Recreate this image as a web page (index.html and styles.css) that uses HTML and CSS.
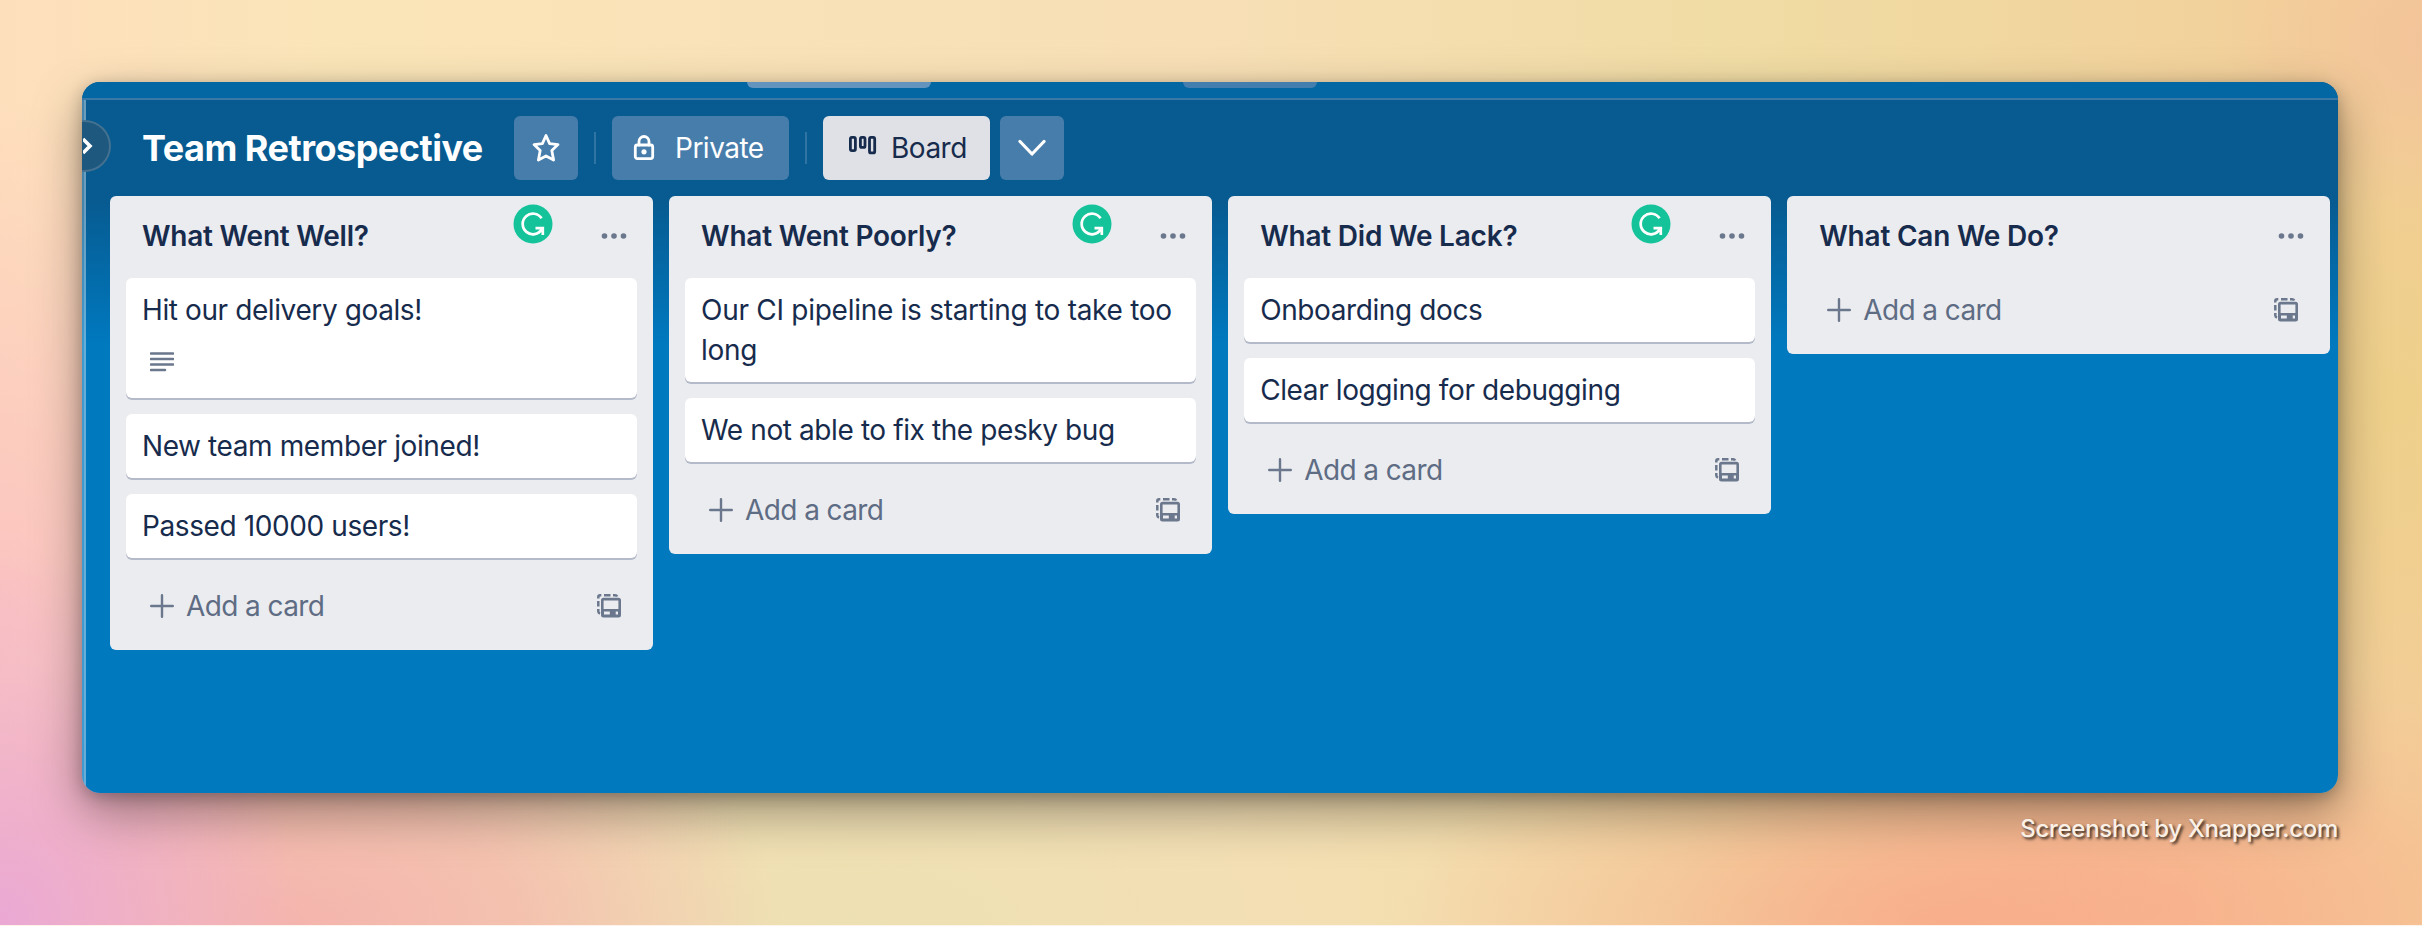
FILE: index.html
```html
<!DOCTYPE html>
<html lang="en">
<head>
<meta charset="utf-8">
<title>Team Retrospective</title>
<link rel="stylesheet" href="styles.css">
</head>
<body>
<svg class="defs" width="0" height="0">
  <symbol id="dots" viewBox="0 0 26 8"><circle cx="3.500" cy="4" r="2.800"/><circle cx="13" cy="4" r="2.800"/><circle cx="22.500" cy="4" r="2.800"/></symbol>
  <symbol id="plus" viewBox="0 0 24 24"><path d="M12 1.200V22.800M1.200 12H22.800"/></symbol>
  <symbol id="template" viewBox="0 0 24 24">
    <path fill="none" stroke="currentColor" stroke-width="2.500" d="M1.300 4.500V3Q1.300 1.300 3 1.300H4.300M7 1.300H13.500M16 1.300H18Q19.600 1.300 20.200 2.600M1.300 7V12.500M1.300 15V17.500Q1.400 19 3 19.600"/>
    <path fill="currentColor" fill-rule="evenodd" d="M6.500 3.800H21.500Q24 3.800 24 6.300V21Q24 23.500 21.500 23.500H6.500Q4 23.500 4 21V6.300Q4 3.800 6.500 3.800ZM6.600 6.400V14.900H21.400V6.400ZM7 17.500V20.500H12.800V17.500ZM18.700 17.500V20.500H21V17.500Z"/>
  </symbol>
  <symbol id="grammar" viewBox="0 0 40 40"><circle cx="20" cy="20" r="19.500" fill="#15c39a"/><path d="M28.600 14.300A10.300 10.300 0 1 0 28.800 25.300M22.500 24.200H29.800V31" fill="none" stroke="#fff" stroke-width="2.700"/></symbol>
</svg>
<div class="window">
  <div class="topbar"><span class="stub stub-search"></span><span class="stub stub-create"></span></div>
  <div class="rail"></div>
  <div class="toggle"><svg width="10" height="20" viewBox="0 0 10 20"><path d="M0 3L7 10L0 17" fill="none" stroke="#fff" stroke-width="3.600"/></svg></div>
  <header class="header">
    <h1 class="board-name">Team Retrospective</h1>
    <button class="btn star"><svg width="28" height="30" viewBox="0 0 28 30"><path d="M14 2.500L17.600 10.600L26 11.600L19.800 17.400L21.600 27L14 23L6.400 27L8.200 17.400L2 11.600L10.400 10.600Z"/></svg></button>
    <span class="sep"></span>
    <button class="btn private"><svg width="22" height="26" viewBox="0 0 22 26"><path d="M6 10V6.500A5 5 0 0 1 16 6.500V10"/><rect x="2.300" y="10" width="17.400" height="13.600" rx="2"/><circle cx="11" cy="16.800" r="2.600" fill="#fff" stroke="none"/></svg><span>Private</span></button>
    <span class="sep"></span>
    <button class="btn view"><svg width="28" height="22" viewBox="0 0 28 22"><rect x="1.400" y="2.400" width="5" height="13.200" rx="1.500"/><rect x="11.400" y="2.400" width="4.600" height="10" rx="1.500"/><rect x="20.500" y="2.400" width="5.200" height="15.500" rx="1.500"/></svg><span>Board</span></button>
    <button class="btn more"><svg width="28" height="18" viewBox="0 0 28 18"><path d="M2 2.500L14 15L26 2.500"/></svg></button>
  </header>
  <main class="lists">
    <section class="list">
      <h2 class="list-head"><span>What Went Well?</span><svg class="dots"><use href="#dots"/></svg></h2>
      <svg class="grammar"><use href="#grammar"/></svg>
      <article class="card with-badge">Hit our delivery goals!<svg class="desc" width="24" height="20" viewBox="0 0 24 20"><path d="M1 1.500H23M1 7H23M1 12.500H23M1 18H15"/></svg></article>
      <article class="card">New team member joined!</article>
      <article class="card">Passed 10000 users!</article>
      <footer class="add"><svg class="plus"><use href="#plus"/></svg><span>Add a card</span><svg class="template"><use href="#template"/></svg></footer>
    </section>
    <section class="list">
      <h2 class="list-head"><span>What Went Poorly?</span><svg class="dots"><use href="#dots"/></svg></h2>
      <svg class="grammar"><use href="#grammar"/></svg>
      <article class="card long">Our CI pipeline is starting to take too<br>long</article>
      <article class="card">We not able to fix the pesky bug</article>
      <footer class="add"><svg class="plus"><use href="#plus"/></svg><span>Add a card</span><svg class="template"><use href="#template"/></svg></footer>
    </section>
    <section class="list">
      <h2 class="list-head"><span>What Did We Lack?</span><svg class="dots"><use href="#dots"/></svg></h2>
      <svg class="grammar"><use href="#grammar"/></svg>
      <article class="card">Onboarding docs</article>
      <article class="card">Clear logging for debugging</article>
      <footer class="add"><svg class="plus"><use href="#plus"/></svg><span>Add a card</span><svg class="template"><use href="#template"/></svg></footer>
    </section>
    <section class="list">
      <h2 class="list-head"><span>What Can We Do?</span><svg class="dots"><use href="#dots"/></svg></h2>
      <footer class="add"><svg class="plus"><use href="#plus"/></svg><span>Add a card</span><svg class="template"><use href="#template"/></svg></footer>
    </section>
  </main>
</div>
<p class="credit">Screenshot by Xnapper.com</p>
</body>
</html>
```
FILE: styles.css
```css
* { box-sizing: border-box; }
body {
  margin: 0;
  width: 2422px;
  height: 926px;
  padding: 82px 84px 0 82px;
  overflow: hidden;
  border-bottom: 1px solid #fdf3ea;
  font-family: Inter, "Liberation Sans", sans-serif;
  color: #172b4d;
  background:
    radial-gradient(ellipse 300px 380px at 0 926px, #eaa8d4 0, #eaa8d400 100%),
    radial-gradient(ellipse 480px 300px at 300px 926px, #f3a5aac0 0, #f4a8aa90 45%, #f4a8aa00 100%),
    radial-gradient(ellipse 560px 240px at 1950px 926px, #f9a888d0 0, #f9a88800 100%),
    radial-gradient(ellipse 480px 260px at 2150px 910px, #f9b38ec0 0, #f9b38e00 100%),
    radial-gradient(ellipse 700px 300px at 850px 926px, #ede0b2 0, #ede0b200 100%),
    radial-gradient(ellipse 200px 180px at 2422px 40px, #f3c29ad0 0, #f3c29a00 100%),
    radial-gradient(ellipse 400px 500px at 0 600px, #fbc3c0 0, #fbc3c000 100%),
    radial-gradient(ellipse 300px 350px at 2390px 400px, #eed08a 0, #eed08a00 100%),
    linear-gradient(90deg, #fedfbc 0, #fae5b8 330px, #f8dfb6 1200px, #f0dca4 1750px, #f3cd98 2422px);
}
.defs { position: absolute; }
.window {
  position: relative;
  height: 711px;
  border-radius: 18px;
  overflow: hidden;
  background: linear-gradient(#075b91 0, #075b91 120px, #0079bf 262px);
}
body::before {
  content: "";
  position: absolute;
  left: 82px;
  top: 82px;
  width: 2256px;
  height: 711px;
  border-radius: 18px;
  box-shadow: 0 20px 50px rgba(0,0,0,.36), 0 4px 16px rgba(0,0,0,.24);
}
.topbar {
  display: flex;
  height: 18px;
  padding-left: 665px;
  gap: 252px;
  background: #0367a3;
  border-bottom: 2px solid #3a78a8;
}
.stub { height: 6px; border-radius: 0 0 6px 6px; }
.stub-search { width: 184px; background: #6394be; }
.stub-create { width: 134px; background: #447eae; }
.rail {
  position: absolute;
  left: 0;
  top: 18px;
  bottom: 0;
  width: 4px;
  background: rgba(255,255,255,.25);
  border-right: 2px solid rgba(255,255,255,.2);
}
.toggle {
  position: absolute;
  left: -24px;
  top: 38px;
  width: 53px;
  height: 52px;
  border-radius: 50%;
  background: #1f587f;
  border: 2px solid #44718f;
  padding: 14px 0 0 23px;
}
.toggle svg { display: block; }
.header {
  display: flex;
  align-items: center;
  height: 96px;
  padding-left: 60px;
}
.board-name {
  margin: 0;
  width: 372px;
  font-size: 36px;
  font-weight: 700;
  letter-spacing: -.5px;
  color: #fff;
  white-space: nowrap;
}
.btn {
  display: flex;
  align-items: center;
  height: 64px;
  border: 0;
  border-radius: 6px;
  padding: 0;
  background: #477dab;
  color: #fff;
  font: 400 28px Inter, sans-serif;
  letter-spacing: -.5px;
}
.btn svg { fill: none; stroke: currentColor; stroke-width: 2.800; stroke-linejoin: round; stroke-linecap: round; }
.star { width: 64px; justify-content: center; }
.sep { width: 2px; height: 32px; margin: 0 16px; background: #2f74a3; }
.private { width: 177px; padding-left: 21px; gap: 20px; }
.view { width: 167px; padding-left: 26px; gap: 14px; background: #dfe1e6; color: #172b4d; }
.view svg { margin-bottom: 4px; }
.more { width: 64px; margin-left: 10px; justify-content: center; }
.more svg { stroke-width: 3.200; }
.lists { display: flex; align-items: flex-start; gap: 16px; padding-left: 28px; }
.list {
  position: relative;
  flex: none;
  width: 543.100px;
  padding: 0 16px;
  border-radius: 6px;
  background: #ebecf0;
}
.list-head {
  display: flex;
  align-items: center;
  justify-content: space-between;
  margin: 0;
  height: 82px;
  padding: 0 10.500px 2px 16px;
  font-size: 28px;
  font-weight: 600;
  letter-spacing: -.22px;
}
.dots { width: 26px; height: 8px; fill: #6b778c; }
.grammar { position: absolute; left: 403px; top: 7.500px; width: 40px; height: 40px; }
.card {
  margin-bottom: 16px;
  padding: 12px 16px;
  border-radius: 6px;
  background: #fff;
  box-shadow: 0 2px 0 #b3bac9;
  font-size: 28px;
  line-height: 40px;
  letter-spacing: -.4px;
  white-space: nowrap;
}
.long { letter-spacing: -.28px; }
.with-badge { height: 120px; }
.desc { display: block; margin: 22px 0 0 8px; fill: none; stroke: #6b778c; stroke-width: 2.600; stroke-linecap: round; }
.add {
  display: flex;
  align-items: center;
  height: 75.500px;
  padding: 0 16px 12px 24px;
  font-size: 28px;
  letter-spacing: -.6px;
  color: #5e6c84;
}
.plus { width: 24px; height: 24px; margin-right: 12px; stroke: #6b778c; stroke-width: 2.400; stroke-linecap: round; }
.template { width: 24px; height: 24px; margin-left: auto; color: #6b778c; }
.credit {
  position: relative;
  margin: 20px 0 0;
  text-align: right;
  font-size: 24px;
  line-height: 32px;
  font-weight: 500;
  letter-spacing: -.3px;
  color: #faf0e6;
  text-shadow: 2px 2px 3px rgba(0,0,0,.8);
}
```
